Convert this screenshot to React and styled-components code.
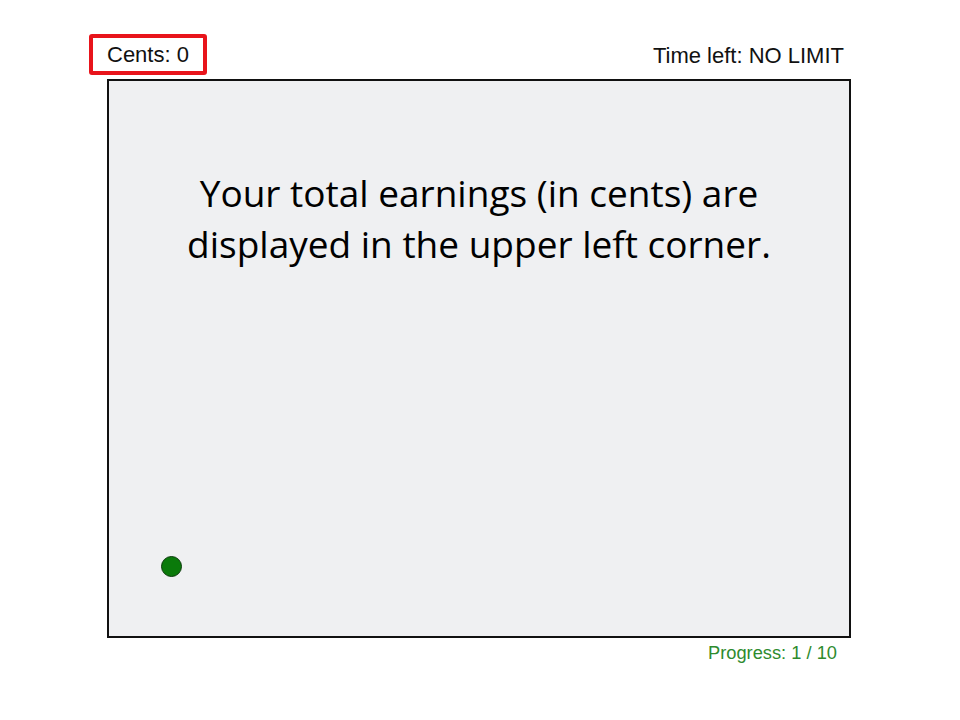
import styled, { createGlobalStyle } from 'styled-components';

const GlobalStyle = createGlobalStyle`
  body {
    margin: 0;
    background: #fff;
    font-family: 'Liberation Sans', Arial, sans-serif;
  }
`;

const Page = styled.div`
  width: 960px;
  height: 720px;
  box-sizing: border-box;
  padding: 34px 0 0 89px;
`;

const Header = styled.div`
  width: 755px;
  height: 41px;
  display: flex;
  justify-content: space-between;
  align-items: center;
  margin-bottom: 4px;
`;

const Cents = styled.div`
  height: 41px;
  box-sizing: border-box;
  border: 4px solid #e8141b;
  border-radius: 3px;
  padding: 0 14px;
  display: flex;
  align-items: center;
  font-size: 22px;
  color: #111;
`;

const Timer = styled.div`
  font-size: 22px;
  color: #111;
  padding-top: 2px;
`;

const Stage = styled.div`
  position: relative;
  margin-left: 18px;
  width: 744px;
  height: 559px;
  box-sizing: border-box;
  border: 2px solid #111;
  background: #eff0f2;
  padding-top: 86px;
`;

const Message = styled.p`
  margin: 0;
  text-align: center;
  font-family: 'Open Sans', 'Liberation Sans', sans-serif;
  font-size: 37px;
  line-height: 51px;
  color: #000;
`;

const Dot = styled.div`
  position: absolute;
  left: 52px;
  top: 475px;
  width: 21px;
  height: 21px;
  box-sizing: border-box;
  border-radius: 50%;
  background: #0a7a0a;
  border: 1px solid #0b3b0b;
`;

const Footer = styled.div`
  width: 730px;
  margin-left: 18px;
  text-align: right;
  padding-top: 4px;
  font-size: 18.3px;
  color: #2e8b2e;
`;

function App() {
  return (
    <>
      <GlobalStyle />
      <Page>
        <Header>
          <Cents>Cents: 0</Cents>
          <Timer>Time left: NO LIMIT</Timer>
        </Header>
        <Stage>
          <Message>
            Your total earnings (in cents) are
            <br />
            displayed in the upper left corner.
          </Message>
          <Dot />
        </Stage>
        <Footer>Progress: 1 / 10</Footer>
      </Page>
    </>
  );
}

export default App;
